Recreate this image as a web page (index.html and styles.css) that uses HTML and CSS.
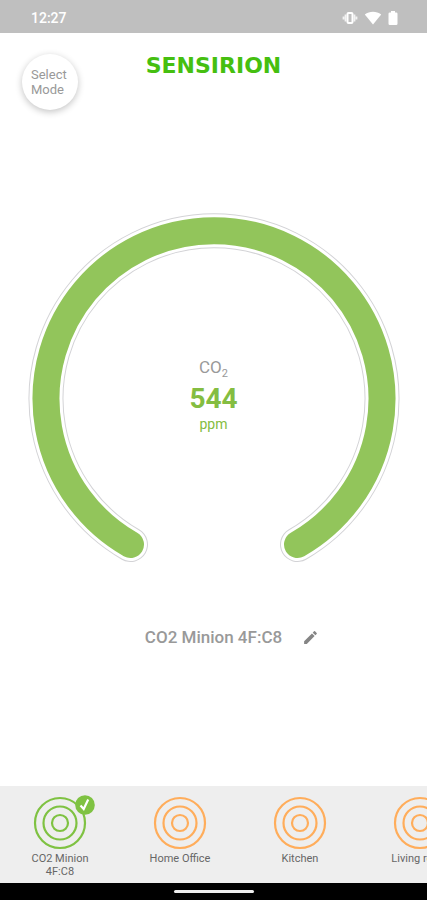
FILE: index.html
```html
<!DOCTYPE html>
<html lang="en">
<head>
<meta charset="utf-8">
<meta name="viewport" content="width=device-width, initial-scale=1">
<title>Sensirion</title>
<link rel="stylesheet" href="styles.css">
</head>
<body>
<div class="status">
  <span class="clock">12:27</span>
  <svg class="status-icon" width="16" height="16" viewBox="0 0 16 16" aria-hidden="true"><rect x="5.500" y="3" width="5" height="10" rx="1" fill="none" stroke="currentColor" stroke-width="2"/><path d="M3.500 4.500v7M12.500 4.500v7M1.500 6.500v3M14.500 6.500v3" stroke="currentColor" stroke-width="1.800" opacity=".8"/></svg>
  <svg class="status-icon" width="18" height="16" viewBox="0 0 18 16" aria-hidden="true"><path d="M.8 4.500C5.500.9 12.500.9 17.200 4.500L9 14.500Z" fill="currentColor"/></svg>
  <svg class="status-icon" width="10" height="16" viewBox="0 0 10 16" aria-hidden="true"><path d="M3 1h4v1.500h1.200q1.300 0 1.300 1.300v9.900q0 1.300-1.300 1.300H1.800q-1.300 0-1.300-1.300V3.800q0-1.300 1.300-1.300H3z" fill="currentColor"/></svg>
</div>
<header class="header">
  <button class="mode" type="button">Select<br>Mode</button>
  <div class="brand">SENSIRION</div>
</header>
<main class="main">
  <section class="gauge">
    <svg class="dial" viewBox="0 0 371 350" aria-hidden="true">
      <g fill="none" stroke-linecap="round">
        <path class="dial-edge" d="M102.500 331.500A168 168 0 1 1 269.500 331.500"/>
        <path class="dial-gap" d="M102.500 331.500A168 168 0 1 1 269.500 331.500"/>
        <path class="dial-value" d="M102.500 331.500A168 168 0 1 1 269.500 331.500"/>
      </g>
    </svg>
    <div class="reading">
      <span class="quantity">CO<span class="index">2</span></span>
      <strong class="value">544</strong>
      <span class="unit">ppm</span>
    </div>
  </section>
  <div class="sensor">
    <h1 class="sensor-name">CO2 Minion 4F:C8</h1>
    <button class="edit" type="button" aria-label="Edit name"><svg width="17" height="17" viewBox="0 0 24 24" aria-hidden="true"><path fill="currentColor" d="M3 17.250V21h3.750L17.810 9.940l-3.750-3.750zM20.710 7.040a1 1 0 0 0 0-1.410l-2.340-2.340a1 1 0 0 0-1.410 0l-1.830 1.830 3.750 3.750z"/></svg></button>
  </div>
</main>
<nav class="devices" aria-label="Devices">
  <a class="device selected" href="#minion">
    <span class="target">
      <svg width="54" height="54" viewBox="0 0 54 54" aria-hidden="true"><g fill="none" stroke="currentColor" stroke-width="2.200"><circle cx="27" cy="27" r="25"/><circle cx="27" cy="27" r="16.500"/><circle cx="27" cy="27" r="8"/></g></svg>
      <svg class="badge" width="20" height="20" viewBox="0 0 20 20" aria-hidden="true"><circle cx="10" cy="10" r="9.800" fill="currentColor"/><path d="M5.500 10.500L8.700 14L13.200 4.500" fill="none" stroke="#fff" stroke-width="2.200"/></svg>
    </span>
    <span class="label">CO2 Minion 4F:C8</span>
  </a>
  <a class="device" href="#office">
    <span class="target"><svg width="54" height="54" viewBox="0 0 54 54" aria-hidden="true"><g fill="none" stroke="currentColor" stroke-width="2.200"><circle cx="27" cy="27" r="25"/><circle cx="27" cy="27" r="16.500"/><circle cx="27" cy="27" r="8"/></g></svg></span>
    <span class="label">Home Office</span>
  </a>
  <a class="device" href="#kitchen">
    <span class="target"><svg width="54" height="54" viewBox="0 0 54 54" aria-hidden="true"><g fill="none" stroke="currentColor" stroke-width="2.200"><circle cx="27" cy="27" r="25"/><circle cx="27" cy="27" r="16.500"/><circle cx="27" cy="27" r="8"/></g></svg></span>
    <span class="label">Kitchen</span>
  </a>
  <a class="device" href="#living">
    <span class="target"><svg width="54" height="54" viewBox="0 0 54 54" aria-hidden="true"><g fill="none" stroke="currentColor" stroke-width="2.200"><circle cx="27" cy="27" r="25"/><circle cx="27" cy="27" r="16.500"/><circle cx="27" cy="27" r="8"/></g></svg></span>
    <span class="label">Living room</span>
  </a>
</nav>
<div class="system-bar"><span class="handle"></span></div>
</body>
</html>
```
FILE: styles.css
```css
* { box-sizing: border-box; }
body {
  margin: 0;
  min-height: 100vh;
  display: flex;
  flex-direction: column;
  background: #fff;
  color: #999;
  font-family: Roboto, "Liberation Sans", sans-serif;
}
button { border: 0; padding: 0; font: inherit; color: inherit; cursor: pointer; }
svg { display: block; }

.status {
  display: flex;
  align-items: center;
  gap: 6px;
  padding: 2px 29px 0 31px;
  height: 33px;
  background: #bfbfbf;
  color: #fff;
}
.clock { margin-right: auto; font-size: 14px; font-weight: 500; }

.header {
  display: grid;
  grid-template-columns: 1fr auto 1fr;
  align-items: start;
  padding: 21px 22px 0;
}
.mode {
  width: 56px;
  height: 56px;
  padding-left: 9px;
  border-radius: 50%;
  background: #fff;
  box-shadow: 0 2px 7px rgba(0, 0, 0, .24);
  font-size: 13px;
  line-height: 15px;
  text-align: left;
}
.brand {
  color: #45bf10;
  font-family: "DejaVu Sans", sans-serif;
  font-size: 22px;
  font-weight: 700;
  line-height: 24px;
}

.main { flex: 1; padding: 103px 28px 32px; }
.gauge { display: grid; place-items: center; }
.gauge > * { grid-area: 1 / 1; }
.dial { width: 100%; overflow: visible; }
.dial-edge { stroke: #d3d3d6; stroke-width: 35px; }
.dial-gap { stroke: #fff; stroke-width: 33px; }
.dial-value { stroke: #92c55b; stroke-width: 27px; }
.reading {
  display: flex;
  flex-direction: column;
  align-items: center;
  padding-top: 12px;
  color: #84bd41;
}
.quantity { margin-bottom: 4px; color: #999; font-size: 17px; line-height: 24px; }
.index { font-size: 11px; line-height: 1; vertical-align: -4px; }
.value { font-size: 28px; font-weight: 700; line-height: 32px; }
.unit { font-size: 14px; line-height: 18px; }

.sensor {
  display: grid;
  grid-template-columns: 1fr auto 1fr;
  align-items: center;
  column-gap: 20px;
  padding-top: 63px;
}
.sensor-name {
  grid-column: 2;
  margin: 0;
  font-size: 17px;
  font-weight: 500;
  line-height: 22px;
}
.edit { justify-self: start; background: none; color: #858585; }

.devices {
  display: flex;
  padding-top: 10px;
  height: 97px;
  overflow-x: auto;
  scrollbar-width: none;
  background: #eee;
}
.device {
  flex: 0 0 120px;
  display: flex;
  flex-direction: column;
  align-items: center;
  gap: 2px;
  color: #ffad5b;
  text-decoration: none;
}
.selected { color: #7fc242; }
.target { position: relative; }
.badge { position: absolute; top: -1px; right: -8px; }
.label {
  width: 64px;
  color: #666;
  font-size: 11px;
  line-height: 13px;
  text-align: center;
}

.system-bar {
  display: grid;
  place-items: center;
  height: 17px;
  background: #000;
}
.handle { width: 80px; height: 3px; border-radius: 2px; background: #eee; }
```
